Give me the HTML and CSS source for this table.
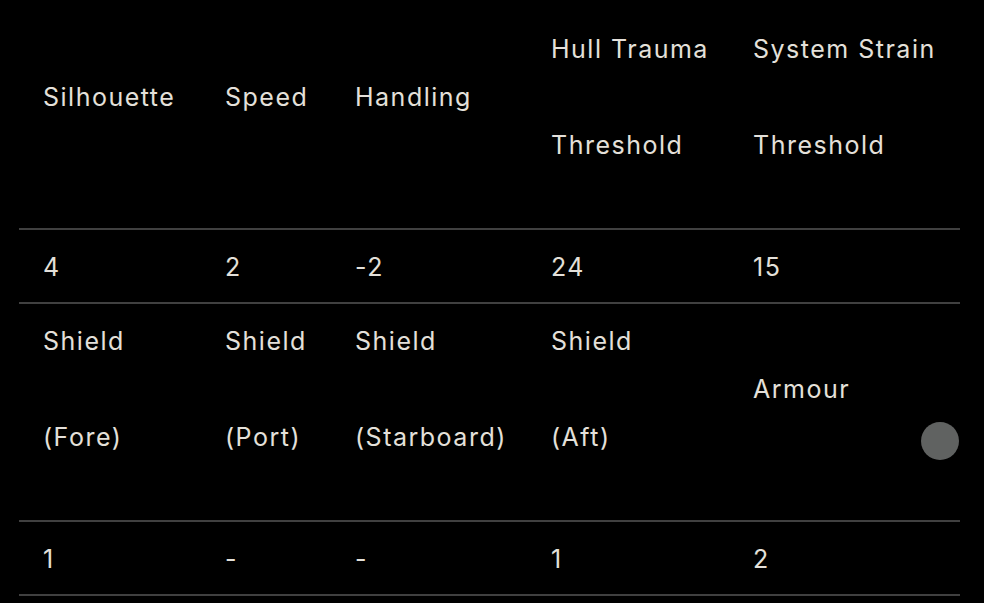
FILE: index.html
```html
<!DOCTYPE html>
<html lang="en">
<head>
<meta charset="utf-8">
<title>Ship stats</title>
<link rel="stylesheet" href="styles.css">
</head>
<body>
<div class="page">
  <table class="stats">
    <colgroup>
      <col class="c1"><col class="c2"><col class="c3"><col class="c4"><col class="c5">
    </colgroup>
    <tr>
      <td><br>Silhouette<br><br></td>
      <td><br>Speed<br><br></td>
      <td><br>Handling<br><br></td>
      <td>Hull Trauma<br><br>Threshold<br><br></td>
      <td>System Strain<br><br>Threshold<br><br></td>
    </tr>
    <tr>
      <td>4</td><td>2</td><td>-2</td><td>24</td><td>15</td>
    </tr>
    <tr>
      <td>Shield<br><br>(Fore)<br><br></td>
      <td>Shield<br><br>(Port)<br><br></td>
      <td>Shield<br><br>(Starboard)<br><br></td>
      <td>Shield<br><br>(Aft)<br><br></td>
      <td><br>Armour<br><br></td>
    </tr>
    <tr>
      <td>1</td><td>-</td><td>-</td><td>1</td><td>2</td>
    </tr>
  </table>
  <div class="dot"></div>
</div>
</body>
</html>
```

FILE: styles.css
```css
html, body {
  margin: 0;
  padding: 0;
  background: #000;
}
.page {
  position: relative;
  padding: 12px 24px 0 19px;
  font-family: Inter, "Noto Sans", sans-serif;
  font-size: 25px;
  line-height: 48px;
  letter-spacing: 1.5px;
  color: #e4e0da;
}
.stats {
  width: 941px;
  border-collapse: collapse;
  table-layout: fixed;
}
.stats td {
  padding: 13px 0 11px 24px;
  vertical-align: top;
  text-align: left;
  white-space: nowrap;
  border-bottom: 2px solid #404040;
}
.c1 { width: 182px; }
.c2 { width: 130px; }
.c3 { width: 196px; }
.c4 { width: 202px; }
.c5 { width: 231px; }
.dot {
  position: absolute;
  left: 921px;
  top: 422px;
  width: 38px;
  height: 38px;
  border-radius: 50%;
  background: #606261;
}
```
